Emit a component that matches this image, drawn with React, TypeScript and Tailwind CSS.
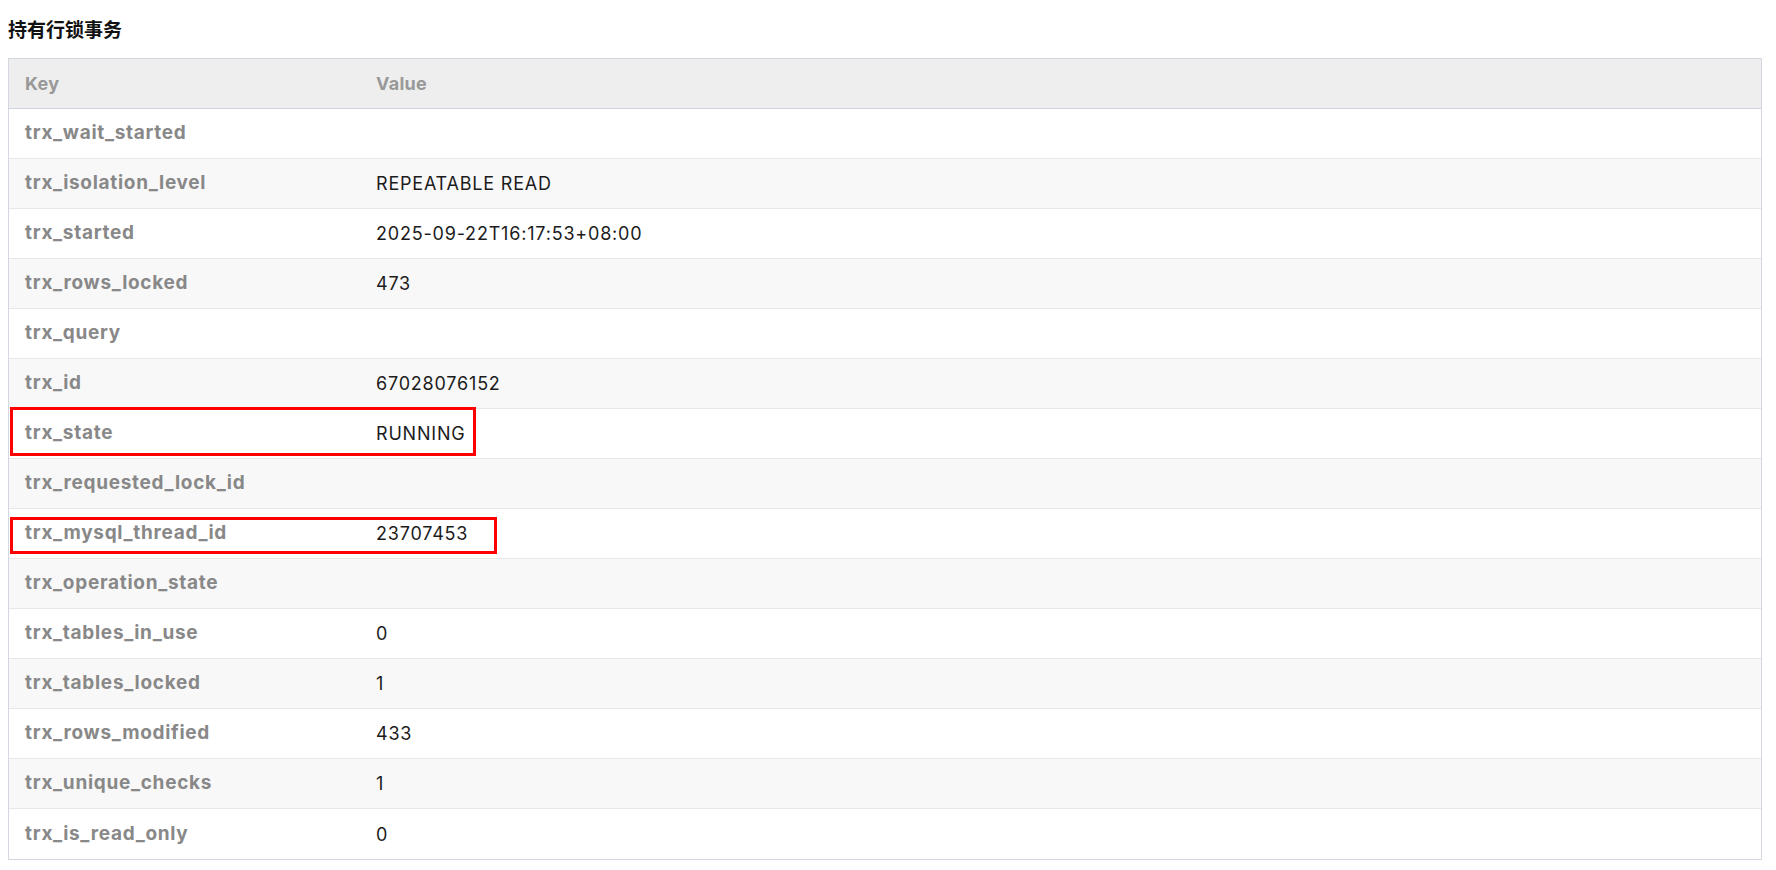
const rows: [string, string][] = [
    ['trx_wait_started', ''],
    ['trx_isolation_level', 'REPEATABLE READ'],
    ['trx_started', '2025-09-22T16:17:53+08:00'],
    ['trx_rows_locked', '473'],
    ['trx_query', ''],
    ['trx_id', '67028076152'],
    ['trx_state', 'RUNNING'],
    ['trx_requested_lock_id', ''],
    ['trx_mysql_thread_id', '23707453'],
    ['trx_operation_state', ''],
    ['trx_tables_in_use', '0'],
    ['trx_tables_locked', '1'],
    ['trx_rows_modified', '433'],
    ['trx_unique_checks', '1'],
    ['trx_is_read_only', '0'],
];

const App = () => {
    return (
        <div className="relative min-h-[870px] bg-white px-2 font-['Inter','Noto_Sans_CJK_SC',sans-serif]">
            <div className="h-[58px] flex items-center text-[19px] font-bold text-[#111] font-['Noto_Sans_CJK_SC',sans-serif]">
                持有行锁事务
            </div>

            <div className="w-[1754px] border border-[#d3d8e0]">
                <div className="h-[50px] flex items-center bg-[#eeeeee] border-b border-[#cdd4de] text-[18px] font-bold tracking-[0.3px] text-[#999]">
                    <div className="w-[351px] px-4">Key</div>
                    <div className="flex-1 px-4">Value</div>
                </div>
                {rows.map(([key, value], i) => (
                    <div
                        key={key}
                        className={`h-[50px] flex items-center border-b border-[#e8e8e8] last:border-b-0 ${i % 2 === 1 ? 'bg-[#f8f8f8]' : 'bg-white'}`}
                    >
                        <div className="w-[351px] px-4 text-[19px] font-bold tracking-[0.7px] text-[#888]">{key}</div>
                        <div className="flex-1 px-4 text-[18px] tracking-[0.8px] text-[#1c1c1c]">{value}</div>
                    </div>
                ))}
            </div>

            {/* annotation boxes */}
            <div className="absolute left-[10px] top-[407px] w-[466px] h-[49px] border-[3px] border-[#ff0000]" />
            <div className="absolute left-[10px] top-[517px] w-[487px] h-[37px] border-[3px] border-[#ff0000]" />
        </div>
    );
};

export default App;
